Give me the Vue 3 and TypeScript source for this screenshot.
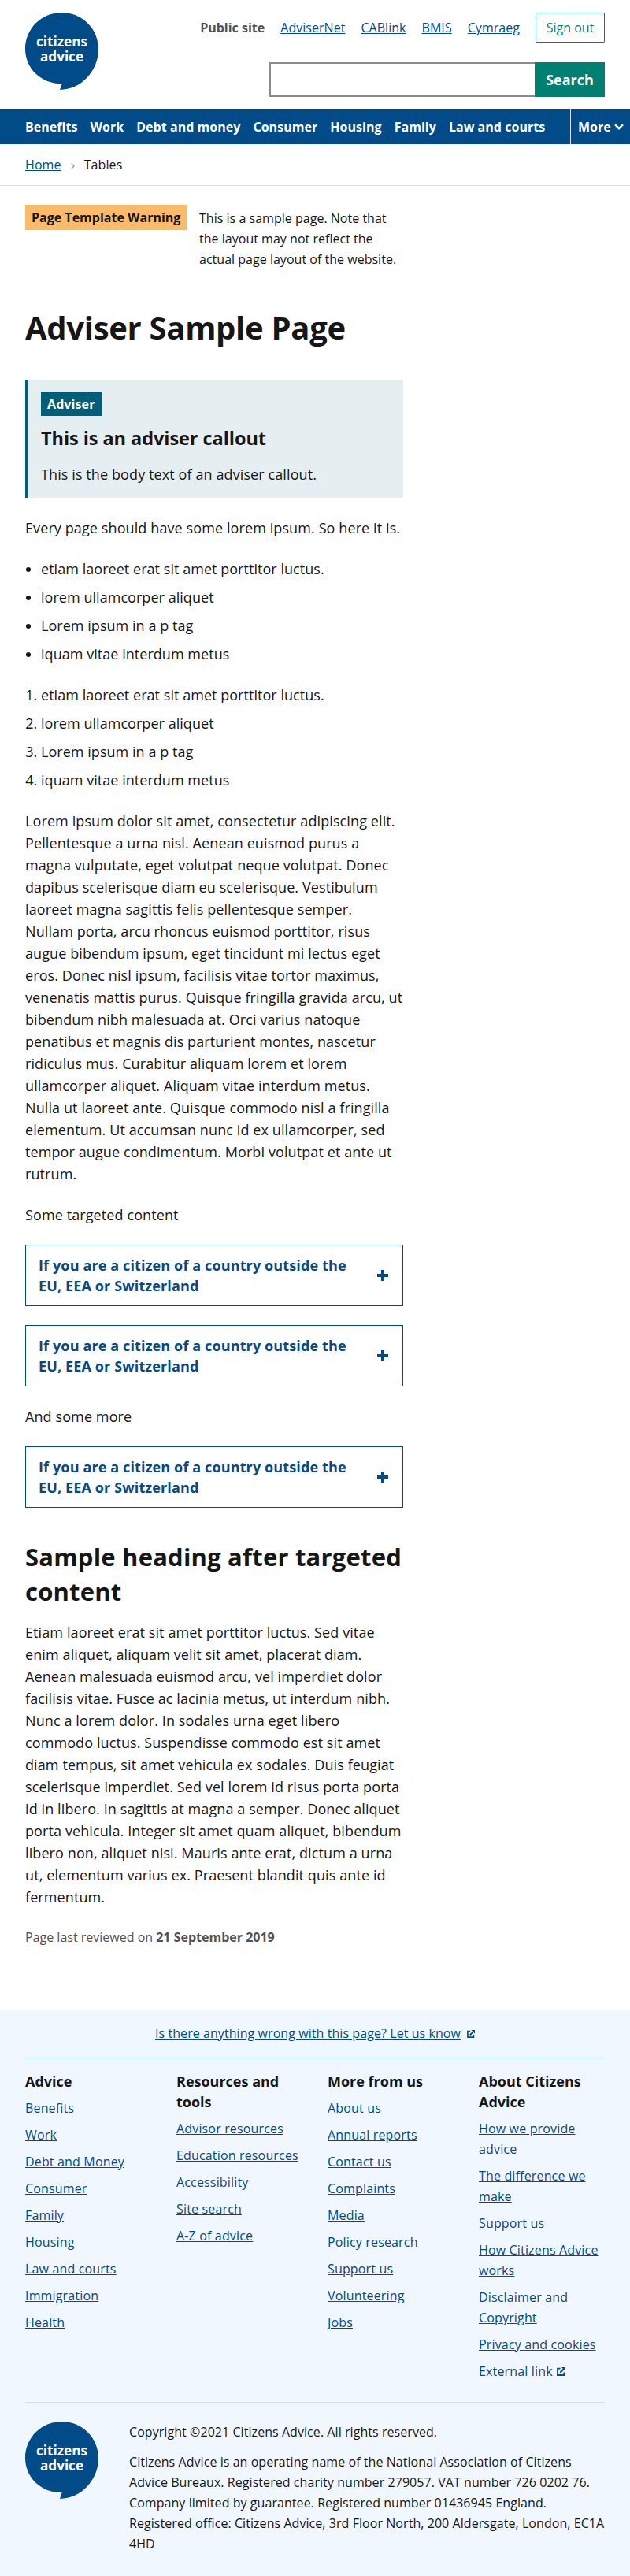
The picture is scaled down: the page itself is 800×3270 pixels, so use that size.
<script setup lang="ts">
interface FooterColumn {
  title: string
  links: { label: string; external?: boolean }[]
}

const topLinks: string[] = ['AdviserNet', 'CABlink', 'BMIS', 'Cymraeg']
const navLinks: string[] = ['Benefits', 'Work', 'Debt and money', 'Consumer', 'Housing', 'Family', 'Law and courts']
const listItems: string[] = [
  'etiam laoreet erat sit amet porttitor luctus.',
  'lorem ullamcorper aliquet',
  'Lorem ipsum in a p tag',
  'iquam vitae interdum metus',
]
const targetedTitle = 'If you are a citizen of a country outside the EU, EEA or Switzerland'

const toLinks = (labels: string[]) => labels.map((label) => ({ label }))
const columns: FooterColumn[] = [
  {
    title: 'Advice',
    links: toLinks(['Benefits', 'Work', 'Debt and Money', 'Consumer', 'Family', 'Housing', 'Law and courts', 'Immigration', 'Health']),
  },
  {
    title: 'Resources and tools',
    links: toLinks(['Advisor resources', 'Education resources', 'Accessibility', 'Site search', 'A-Z of advice']),
  },
  {
    title: 'More from us',
    links: toLinks(['About us', 'Annual reports', 'Contact us', 'Complaints', 'Media', 'Policy research', 'Support us', 'Volunteering', 'Jobs']),
  },
  {
    title: 'About Citizens Advice',
    links: [
      ...toLinks(['How we provide advice', 'The difference we make', 'Support us', 'How Citizens Advice works', 'Disclaimer and Copyright', 'Privacy and cookies']),
      { label: 'External link', external: true },
    ],
  },
]
</script>

<template>
  <div class="page">
    <header class="header">
      <a class="logo" href="#">
        <svg width="93" height="98" viewBox="0 0 93 98">
          <path d="M46.500 0C20.800 0 0 20.300 0 46C0 71 20 90.300 46.700 90.300L44 97.900C71 97.900 93 74 93 46.500C93 20.300 72.200 0 46.500 0Z" fill="#004b88" />
          <text class="logo-text" x="46.500" y="43.300" textLength="65" lengthAdjust="spacingAndGlyphs">citizens</text>
          <text class="logo-text" x="46.500" y="61.600" textLength="55" lengthAdjust="spacingAndGlyphs">advice</text>
        </svg>
      </a>
      <div class="header-side">
        <div class="header-links">
          <strong class="site">Public site</strong>
          <a v-for="l in topLinks" :key="l" href="#">{{ l }}</a>
          <button class="sign-out" type="button">Sign out</button>
        </div>
        <form class="search">
          <input class="search-input" type="text" aria-label="Search" />
          <button class="search-button" type="button">Search</button>
        </form>
      </div>
    </header>

    <nav class="nav">
      <div class="nav-links">
        <a v-for="l in navLinks" :key="l" href="#">{{ l }}</a>
      </div>
      <button class="more" type="button">
        More
        <svg width="12" height="8" viewBox="0 0 12 8"><path d="M1 1.200L6 6.200L11 1.200" fill="none" stroke="#fff" stroke-width="2.400" /></svg>
      </button>
    </nav>

    <div class="breadcrumb">
      <a href="#">Home</a>
      <svg width="5" height="8" viewBox="0 0 5 8"><path d="M0.800 0.700L4 4L0.800 7.300" fill="none" stroke="#8b8b8f" stroke-width="1.200" /></svg>
      <span>Tables</span>
    </div>

    <main class="main">
      <div class="warning">
        <strong class="warning-tag">Page Template Warning</strong>
        <p class="warning-text">This is a sample page. Note that the layout may not reflect the actual page layout of the website.</p>
      </div>
      <h1>Adviser Sample Page</h1>
      <section class="callout">
        <strong class="badge">Adviser</strong>
        <h3>This is an adviser callout</h3>
        <p>This is the body text of an adviser callout.</p>
      </section>
      <p>Every page should have some lorem ipsum. So here it is.</p>
      <ul>
        <li v-for="i in listItems" :key="i">{{ i }}</li>
      </ul>
      <ol>
        <li v-for="i in listItems" :key="i">{{ i }}</li>
      </ol>
      <p>
        Lorem ipsum dolor sit amet, consectetur adipiscing elit. Pellentesque a urna nisl. Aenean euismod purus a magna
        vulputate, eget volutpat neque volutpat. Donec dapibus scelerisque diam eu scelerisque. Vestibulum laoreet magna
        sagittis felis pellentesque semper. Nullam porta, arcu rhoncus euismod porttitor, risus augue bibendum ipsum, eget
        tincidunt mi lectus eget eros. Donec nisl ipsum, facilisis vitae tortor maximus, venenatis mattis purus. Quisque
        fringilla gravida arcu, ut bibendum nibh malesuada at. Orci varius natoque penatibus et magnis dis parturient
        montes, nascetur ridiculus mus. Curabitur aliquam lorem et lorem ullamcorper aliquet. Aliquam vitae interdum metus.
        Nulla ut laoreet ante. Quisque commodo nisl a fringilla elementum. Ut accumsan nunc id ex ullamcorper, sed tempor
        augue condimentum. Morbi volutpat et ante ut rutrum.
      </p>
      <p>Some targeted content</p>
      <button v-for="n in 2" :key="n" class="targeted" type="button">
        <span>{{ targetedTitle }}</span>
        <svg width="16" height="16" viewBox="0 0 16 16"><path d="M8 1V15M1 8H15" stroke="#004b88" stroke-width="4" /></svg>
      </button>
      <p>And some more</p>
      <button class="targeted" type="button">
        <span>{{ targetedTitle }}</span>
        <svg width="16" height="16" viewBox="0 0 16 16"><path d="M8 1V15M1 8H15" stroke="#004b88" stroke-width="4" /></svg>
      </button>
      <h2>Sample heading after targeted content</h2>
      <p>
        Etiam laoreet erat sit amet porttitor luctus. Sed vitae enim aliquet, aliquam velit sit amet, placerat diam. Aenean
        malesuada euismod arcu, vel imperdiet dolor facilisis vitae. Fusce ac lacinia metus, ut interdum nibh. Nunc a lorem
        dolor. In sodales urna eget libero commodo luctus. Suspendisse commodo est sit amet diam tempus, sit amet vehicula
        ex sodales. Duis feugiat scelerisque imperdiet. Sed vel lorem id risus porta porta id in libero. In sagittis at
        magna a semper. Donec aliquet porta vehicula. Integer sit amet quam aliquet, bibendum libero non, aliquet nisi.
        Mauris ante erat, dictum a urna ut, elementum varius ex. Praesent blandit quis ante id fermentum.
      </p>
      <p class="reviewed">Page last reviewed on <strong>21 September 2019</strong></p>
    </main>

    <footer class="footer">
      <div class="feedback">
        <a href="#">Is there anything wrong with this page? Let us know</a>
        <svg class="ext" width="10" height="10" viewBox="0 0 11 11"><path d="M4.500 1.700H1V10H9.300V6.500" fill="none" stroke="#004b88" stroke-width="1.800" /><path d="M6 0H11V5L9.300 3.300L5 7.600L3.500 6.100L7.800 1.800Z" fill="#004b88" /></svg>
      </div>
      <div class="columns">
        <section v-for="c in columns" :key="c.title">
          <h4>{{ c.title }}</h4>
          <div v-for="l in c.links" :key="l.label" class="footer-link">
            <a href="#">{{ l.label }}</a>
            <svg v-if="l.external" class="ext ext-inline" width="11" height="11" viewBox="0 0 11 11"><path d="M4.500 1.700H1V10H9.300V6.500" fill="none" stroke="#004b88" stroke-width="1.800" /><path d="M6 0H11V5L9.300 3.300L5 7.600L3.500 6.100L7.800 1.800Z" fill="#004b88" /></svg>
          </div>
        </section>
      </div>
      <div class="legal">
        <svg width="93" height="98" viewBox="0 0 93 98">
          <path d="M46.500 0C20.800 0 0 20.300 0 46C0 71 20 90.300 46.700 90.300L44 97.900C71 97.900 93 74 93 46.500C93 20.300 72.200 0 46.500 0Z" fill="#004b88" />
          <text class="logo-text" x="46.500" y="43.300" textLength="65" lengthAdjust="spacingAndGlyphs">citizens</text>
          <text class="logo-text" x="46.500" y="61.600" textLength="55" lengthAdjust="spacingAndGlyphs">advice</text>
        </svg>
        <div class="legal-text">
          <p>Copyright ©2021 Citizens Advice. All rights reserved.</p>
          <p>
            Citizens Advice is an operating name of the National Association of Citizens Advice Bureaux. Registered charity
            number 279057. VAT number 726 0202 76. Company limited by guarantee. Registered number 01436945 England.
            Registered office: Citizens Advice, 3rd Floor North, 200 Aldersgate, London, EC1A 4HD
          </p>
        </div>
      </div>
    </footer>
  </div>
</template>

<style>
body {
  margin: 0;
  background: #fff;
}
</style>

<style scoped>
.page {
  width: 800px;
  font-family: 'Open Sans', 'Noto Sans', sans-serif;
  font-size: 16px;
  line-height: 26px;
  color: #161616;
}
.page * {
  box-sizing: border-box;
}
a {
  color: #004b88;
  text-decoration: underline;
}
button,
input {
  font: inherit;
  letter-spacing: inherit;
  margin: 0;
}
svg {
  display: block;
  flex: none;
}
p {
  margin: 0;
}
.header {
  display: flex;
  justify-content: space-between;
  height: 139px;
  padding: 16px 32px 0;
}
.logo-text {
  font-size: 18px;
  font-weight: 700;
  letter-spacing: 0;
  fill: #fff;
  text-anchor: middle;
}
.header-links {
  display: flex;
  justify-content: flex-end;
  align-items: center;
  gap: 20px;
  height: 38px;
}
.header-links a {
  letter-spacing: 0.04px;
}
.site {
  color: #4f5251;
}
.sign-out {
  height: 38px;
  width: 88px;
  padding: 0;
  border: 1px solid #008073;
  border-radius: 1px;
  background: #fff;
  color: #008073;
}
.search {
  display: flex;
  width: 426px;
  height: 44px;
  margin-top: 25px;
  margin-left: auto;
}
.search-input {
  flex: 1;
  min-width: 0;
  border: 2px solid #8b8b8f;
  border-right: 0;
  border-radius: 0;
  background: #fff;
}
.search-button {
  width: 89px;
  padding: 0;
  border: 0;
  background: #008073;
  color: #fff;
  font-size: 18px;
  font-weight: 700;
}
.nav {
  display: flex;
  justify-content: space-between;
  height: 44px;
  padding-left: 32px;
  background: #004b88;
}
.nav-links {
  display: flex;
  align-items: center;
  gap: 16px;
  letter-spacing: 0.04px;
}
.nav-links a {
  color: #fff;
  font-weight: 700;
  text-decoration: none;
}
.more {
  display: flex;
  align-items: center;
  gap: 4px;
  width: 76px;
  padding: 0 0 0 9px;
  border: 0;
  border-left: 1px solid #e0e0e0;
  background: none;
  color: #fff;
  font-weight: 700;
}
.breadcrumb {
  display: flex;
  align-items: center;
  gap: 12px;
  height: 53px;
  padding: 0 32px;
  border-bottom: 1px solid #e0e0e0;
  letter-spacing: 0.1px;
}
.breadcrumb svg {
  margin-top: 4px;
}
.main {
  width: 480px;
  height: 2316px;
  margin-left: 32px;
  padding-top: 24px;
  font-size: 18px;
  line-height: 28px;
  letter-spacing: 0.1px;
}
.main > p,
.main > ul,
.main > ol,
.targeted {
  margin: 0 0 24px;
}
.warning {
  display: flex;
  align-items: flex-start;
  gap: 16px;
  font-size: 16px;
  line-height: 26px;
  letter-spacing: 0.02px;
}
.warning-tag {
  flex: none;
  width: 205px;
  height: 32px;
  padding: 3px 0 3px 8px;
  background: #fcbb69;
  letter-spacing: 0;
}
.warning-text {
  margin-top: 4px;
}
h1 {
  margin: 46px 0 38px;
  font-size: 40px;
  line-height: 56px;
  letter-spacing: -0.3px;
}
.callout {
  height: 150px;
  margin-bottom: 24px;
  padding: 16px;
  border-left: 4px solid #005f78;
  background: #e5eef1;
}
.badge {
  display: block;
  width: fit-content;
  height: 30px;
  padding: 2px 8px;
  background: #005f78;
  color: #fff;
  font-size: 16px;
  line-height: 26px;
}
.callout h3 {
  margin: 11px 0 15px;
  font-size: 23.5px;
  line-height: 34px;
  letter-spacing: -0.06px;
}
ul,
ol {
  padding-left: 20px;
  letter-spacing: 0.04px;
}
li {
  margin-bottom: 8px;
}
li:last-child {
  margin-bottom: 0;
}
.targeted {
  display: flex;
  justify-content: space-between;
  align-items: center;
  width: 480px;
  height: 78px;
  padding: 0 17px 0 16px;
  border: 1px solid #004b88;
  background: #fff;
  color: #004b88;
  font-size: 18px;
  font-weight: 700;
  line-height: 26px;
  letter-spacing: 0.13px;
  text-align: left;
}
.targeted span {
  width: 400px;
}
h2 {
  margin: 40px 0 16px;
  font-size: 31px;
  line-height: 44px;
  letter-spacing: 0.2px;
}
.main .reviewed {
  font-size: 16px;
  line-height: 26px;
  letter-spacing: 0;
  color: #4f5251;
}
.footer {
  height: 718px;
  padding: 0 32px;
  background: #f0f7ff;
}
.feedback {
  display: flex;
  justify-content: center;
  align-items: center;
  gap: 8px;
  height: 61px;
  padding-bottom: 2px;
  border-bottom: 1px solid #004b88;
  letter-spacing: 0.07px;
}
.feedback svg {
  margin-top: 2px;
}
.columns {
  display: grid;
  grid-template-columns: repeat(4, 160px);
  gap: 32px;
  height: 436px;
  padding-top: 16px;
}
h4 {
  margin: 0 0 8px;
  font-size: 18px;
  line-height: 26px;
}
.footer-link {
  margin-bottom: 8px;
  letter-spacing: 0.16px;
}
.ext-inline {
  display: inline-block;
  margin-left: 5px;
}
.legal {
  display: flex;
  gap: 39px;
  padding-top: 24px;
  border-top: 1px solid #e0e0e0;
}
.legal-text {
  flex: none;
  width: 610px;
  letter-spacing: 0.06px;
}
.legal-text p {
  margin-bottom: 12px;
}
</style>
